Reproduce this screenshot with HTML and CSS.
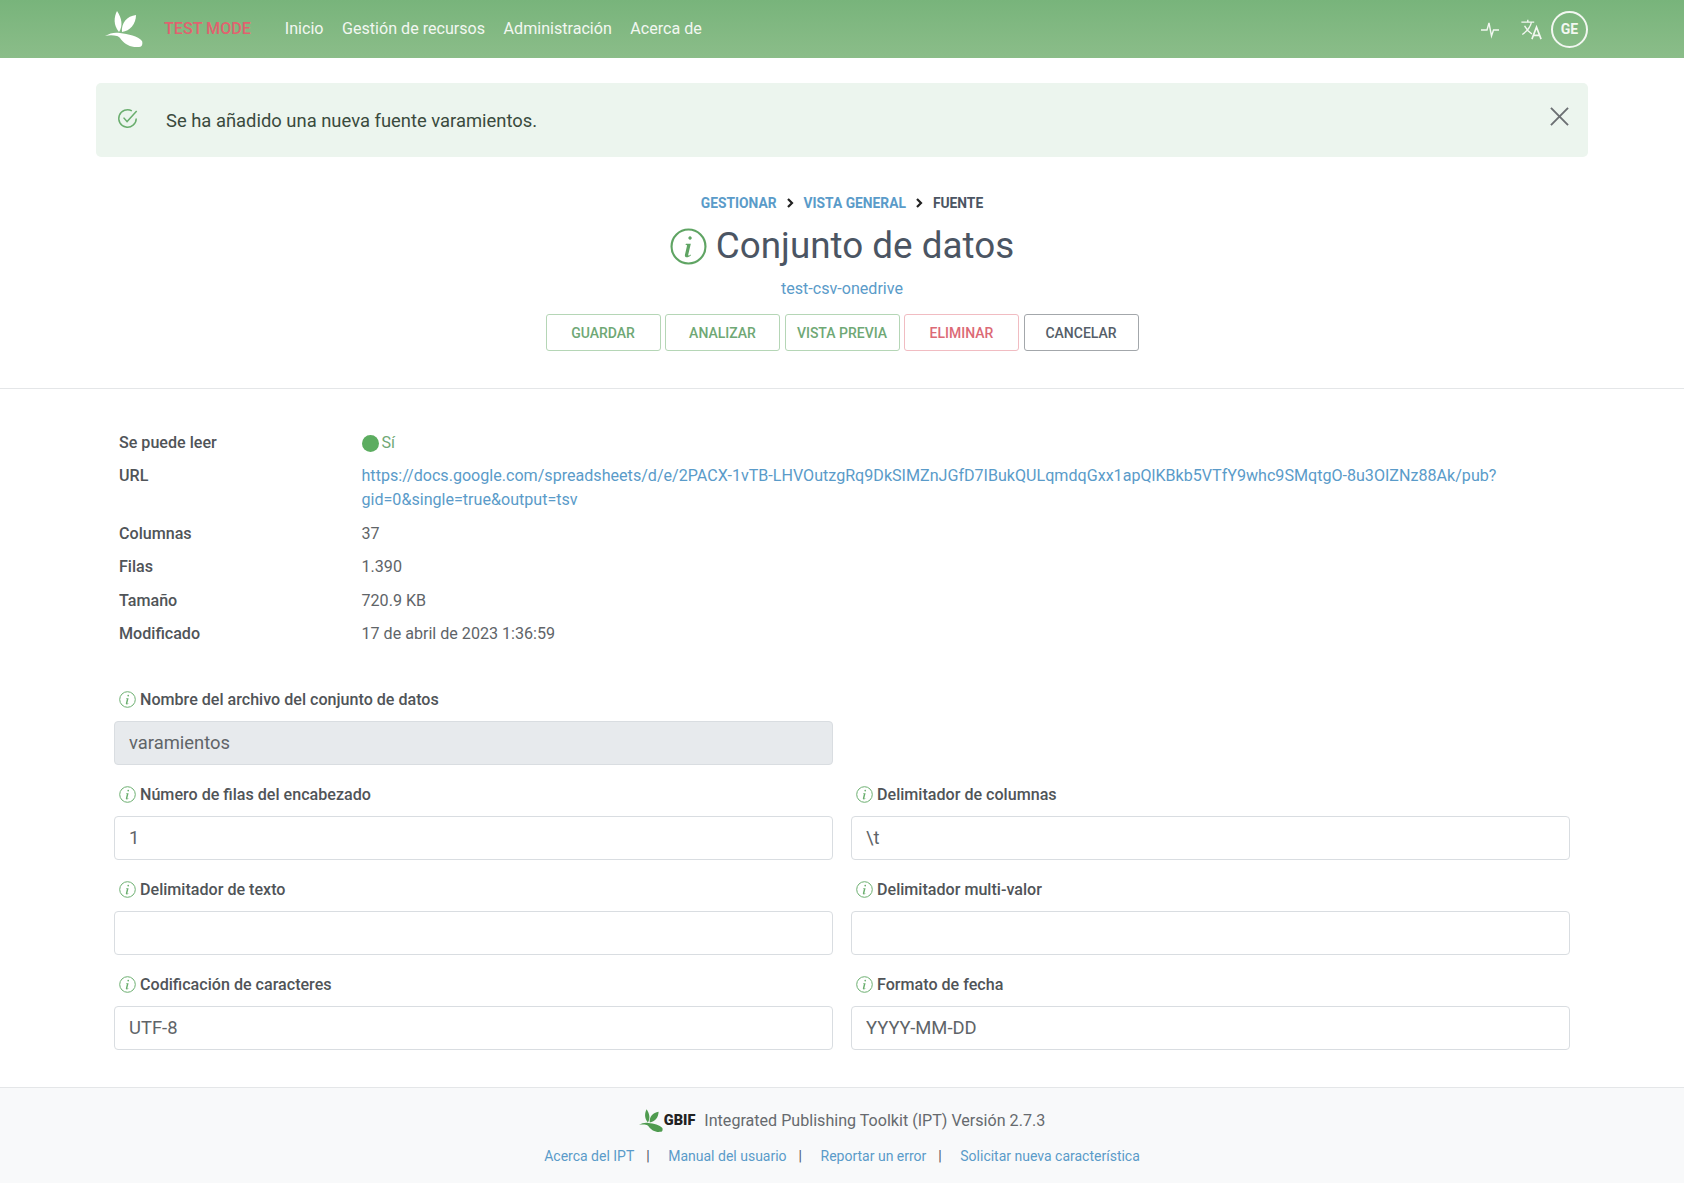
FILE: index.html
```html
<!DOCTYPE html>
<html lang="es">
<head>
    <meta charset="UTF-8">
    <title>IPT - Fuente</title>
    <link rel="stylesheet" href="styles.css">
</head>
<body>
    <svg class="sprites" width="0" height="0">
        <symbol id="info" viewBox="0 0 24 24">
            <circle cx="12" cy="12" r="11" fill="none" stroke="currentColor" stroke-width="1.4"/>
            <path d="M13 5.4a1.1 1.1 0 1 0 .01 0zM10.4 10.2h3.1l-1.7 7.2c-.1.5.3.6.7.4l1-.6.1.5c-1 .9-1.9 1.3-2.7 1.3-1 0-1.4-.6-1.2-1.6l1.3-5.8c.1-.5-.2-.7-1-.8z" fill="currentColor"/>
        </symbol>
        <symbol id="leaf" viewBox="0 0 38 36">
            <path d="M12 0c-3 6-4 14 2 21 4-6 3-14-2-21z"/>
            <path d="M31 4c-9 1-15 8-14 17 8-1 14-8 14-17z"/>
            <path d="M0 25c5-3 10-4 15-3 8 1 18 3 22 8 1 3 0 6-3 6-8 1-15-3-19-9-1-1-2-2-3-2-4-1-8-1-12 0z"/>
        </symbol>
    </svg>

    <nav class="navbar">
        <div class="navbar-inner">
            <a class="brand"><svg class="brand-logo"><use href="#leaf"/></svg></a>
            <span class="test-mode">TEST MODE</span>
            <ul class="nav-links">
                <li><a>Inicio</a></li>
                <li><a>Gestión de recursos</a></li>
                <li><a>Administración</a></li>
                <li><a>Acerca de</a></li>
            </ul>
            <div class="nav-right">
                <svg class="nav-icon" viewBox="0 0 20 20" fill="none" stroke="currentColor" stroke-width="1.4">
                    <path d="M1 11h6l2-7 2.500 13 2-6h5.500"/>
                </svg>
                <svg class="nav-icon nav-translate" viewBox="0 0 24 24" fill="none" stroke="currentColor" stroke-width="1.500">
                    <path d="M1.500 4.500h14M8.500 2v2.500"/>
                    <path d="M12.500 4.500c-1 5-5 10-10 13.500M5 8.500c2 4 5 7 8 9"/>
                    <path d="M13 23l5-13 5 13M14.800 19h6.400" stroke-width="1.800"/>
                </svg>
                <span class="avatar">GE</span>
            </div>
        </div>
    </nav>

    <div class="alert">
        <svg class="alert-icon" viewBox="0 0 24 24" fill="none" stroke="currentColor" stroke-width="1.700">
            <path d="M22 12a10 10 0 1 1-5-8.700"/>
            <path d="M7.500 11l4 4.500L22.500 3.500"/>
        </svg>
        <span class="alert-text">Se ha añadido una nueva fuente varamientos.</span>
        <svg class="alert-close" viewBox="0 0 20 20" fill="none" stroke="currentColor" stroke-width="2">
            <path d="M1 1l18 18M19 1L1 19"/>
        </svg>
    </div>

    <header class="page-head">
        <ol class="breadcrumb">
            <li><a>Gestionar</a></li>
            <li class="sep"><svg width="7" height="10" viewBox="0 0 7 10" fill="none" stroke="currentColor" stroke-width="2.200"><path d="M1 1l4 4-4 4"/></svg></li>
            <li><a>Vista general</a></li>
            <li class="sep"><svg width="7" height="10" viewBox="0 0 7 10" fill="none" stroke="currentColor" stroke-width="2.200"><path d="M1 1l4 4-4 4"/></svg></li>
            <li class="current">Fuente</li>
        </ol>
        <h1 class="title"><svg class="title-icon"><use href="#info"/></svg>Conjunto de datos</h1>
        <a class="subtitle">test-csv-onedrive</a>
        <div class="actions">
            <button class="btn btn-green">Guardar</button>
            <button class="btn btn-green">Analizar</button>
            <button class="btn btn-green">Vista previa</button>
            <button class="btn btn-red">Eliminar</button>
            <button class="btn btn-dark">Cancelar</button>
        </div>
    </header>

    <main class="content">
        <dl class="details">
            <dt>Se puede leer</dt>
            <dd class="readable"><span class="dot"></span>Sí</dd>
            <dt>URL</dt>
            <dd><a>https://docs.google.com/spreadsheets/d/e/2PACX-1vTB-LHVOutzgRq9DkSIMZnJGfD7IBukQULqmdqGxx1apQlKBkb5VTfY9whc9SMqtgO-8u3OIZNz88Ak/pub?gid=0&amp;single=true&amp;output=tsv</a></dd>
            <dt>Columnas</dt>
            <dd>37</dd>
            <dt>Filas</dt>
            <dd>1.390</dd>
            <dt>Tamaño</dt>
            <dd>720.9 KB</dd>
            <dt>Modificado</dt>
            <dd>17 de abril de 2023 1:36:59</dd>
        </dl>

        <form class="form-grid">
            <div class="field">
                <label><svg class="label-icon"><use href="#info"/></svg>Nombre del archivo del conjunto de datos</label>
                <input class="input" type="text" value="varamientos" disabled>
            </div>
            <div class="field"></div>
            <div class="field">
                <label><svg class="label-icon"><use href="#info"/></svg>Número de filas del encabezado</label>
                <input class="input" type="text" value="1">
            </div>
            <div class="field">
                <label><svg class="label-icon"><use href="#info"/></svg>Delimitador de columnas</label>
                <input class="input" type="text" value="\t">
            </div>
            <div class="field">
                <label><svg class="label-icon"><use href="#info"/></svg>Delimitador de texto</label>
                <input class="input" type="text" value="">
            </div>
            <div class="field">
                <label><svg class="label-icon"><use href="#info"/></svg>Delimitador multi-valor</label>
                <input class="input" type="text" value="">
            </div>
            <div class="field">
                <label><svg class="label-icon"><use href="#info"/></svg>Codificación de caracteres</label>
                <input class="input" type="text" value="UTF-8">
            </div>
            <div class="field">
                <label><svg class="label-icon"><use href="#info"/></svg>Formato de fecha</label>
                <input class="input" type="text" value="YYYY-MM-DD">
            </div>
        </form>
    </main>

    <footer class="footer">
        <div class="footer-top">
            <svg class="footer-logo"><use href="#leaf"/></svg>
            <span class="gbif">GBIF</span>
            <span class="version">Integrated Publishing Toolkit (IPT) Versión 2.7.3</span>
        </div>
        <ul class="footer-links">
            <li><a>Acerca del IPT</a></li>
            <li><a>Manual del usuario</a></li>
            <li><a>Reportar un error</a></li>
            <li><a>Solicitar nueva característica</a></li>
        </ul>
    </footer>
</body>
</html>
```

FILE: styles.css
```css
* {
    box-sizing: border-box;
}

body {
    margin: 0;
    font-family: Roboto, "Liberation Sans", sans-serif;
    font-size: 16.100px;
    line-height: 24px;
    color: #4b5563;
    background-color: #fff;
}

a {
    color: #5a9bc9;
    text-decoration: none;
}

ul, ol {
    list-style: none;
    margin: 0;
    padding: 0;
}

.sprites {
    position: absolute;
}

.navbar {
    height: 58px;
    background: linear-gradient(#78b47b, #8bbd89);
}

.navbar-inner {
    display: flex;
    align-items: center;
    height: 58px;
    margin: 0 96px;
    padding-left: 9px;
}

.brand {
    display: flex;
}

.brand-logo {
    width: 38px;
    height: 36px;
    fill: #fff;
}

.test-mode {
    margin-left: 21px;
    font-weight: 500;
    color: #e0636f;
}

.nav-links {
    display: flex;
    gap: 18.500px;
    margin-left: 34px;
}

.nav-links a {
    color: #f2f7f1;
}

.nav-right {
    display: flex;
    align-items: center;
    margin-left: auto;
    color: #f2f7f1;
}

.nav-icon {
    width: 20px;
    height: 20px;
}

.nav-translate {
    width: 22px;
    height: 22px;
    margin-left: 20px;
}

.avatar {
    display: flex;
    align-items: center;
    justify-content: center;
    width: 37px;
    height: 37px;
    margin-left: 9px;
    border: 2px solid #f2f7f1;
    border-radius: 50%;
    font-size: 14px;
    font-weight: 700;
}

.alert {
    display: flex;
    align-items: center;
    height: 74px;
    margin: 25px 96px 0;
    padding: 0 19px 0 21px;
    background-color: #ecf5ee;
    border-radius: 5px;
    color: #3a4a3d;
}

.alert-icon {
    width: 21px;
    height: 21px;
    margin-top: -4px;
    color: #6aae6e;
}

.alert-text {
    margin: 2px 0 0 28px;
    font-size: 18.400px;
}

.alert-close {
    width: 19px;
    height: 19px;
    margin-left: auto;
    margin-top: -7px;
    color: #6b6f72;
}

.page-head {
    display: flex;
    flex-direction: column;
    align-items: center;
    height: 232px;
    padding-top: 34px;
    border-bottom: 1px solid #e4e6e8;
}

.breadcrumb {
    display: flex;
    align-items: center;
    gap: 10px;
    font-size: 13.800px;
    line-height: 24px;
    font-weight: 700;
    text-transform: uppercase;
}

.breadcrumb .sep {
    display: flex;
    color: #222;
}

.title {
    display: flex;
    align-items: center;
    margin: 0;
    height: 52px;
    margin-top: 5px;
    font-size: 36.800px;
    font-weight: 400;
    color: #4b5563;
}

.title-icon {
    width: 37px;
    height: 37px;
    margin-right: 9px;
    color: #5fa463;
}

.subtitle {
    margin-top: 5px;
}

.actions {
    display: flex;
    gap: 4.500px;
    margin-top: 13px;
}

.btn {
    width: 115px;
    height: 37px;
    padding: 0;
    background-color: #fff;
    border: 1px solid;
    border-radius: 3px;
    font-family: inherit;
    font-size: 14px;
    font-weight: 500;
    text-transform: uppercase;
}

.btn-green {
    color: #6fa875;
    border-color: #b5d6b6;
}

.btn-red {
    color: #dc6a76;
    border-color: #f1bcc2;
}

.btn-dark {
    color: #555e69;
    border-color: #a3a7ab;
}

.content {
    padding: 0 96px;
}

.details {
    display: grid;
    grid-template-columns: 242.500px 1fr;
    row-gap: 9.400px;
    margin: 42px 0 0;
    padding: 0 23px;
    color: #606468;
}

.details dt {
    font-weight: 500;
    color: #505458;
}

.details dd {
    margin: 0;
    overflow-wrap: anywhere;
}

.readable {
    display: flex;
    align-items: center;
    color: #6fa875;
}

.details .readable {
    color: #6fa875;
}

.dot {
    width: 17px;
    height: 17px;
    margin-right: 3px;
    background-color: #5cad60;
    border-radius: 50%;
}

.form-grid {
    display: grid;
    grid-template-columns: 1fr 1fr;
    column-gap: 18px;
    row-gap: 11px;
    margin-top: 42px;
    padding: 0 18px;
}

.field {
    min-height: 84px;
}

.field label {
    display: flex;
    align-items: center;
    height: 24px;
    padding-left: 5px;
    font-weight: 500;
    color: #505458;
    margin-bottom: 9px;
}

.label-icon {
    width: 17px;
    height: 17px;
    margin-right: 4px;
    color: #6aae6e;
}

.input {
    display: block;
    width: 100%;
    height: 44px;
    padding: 0 14px;
    border: 1px solid #d9dde1;
    border-radius: 4px;
    font-family: inherit;
    font-size: 18.400px;
    color: #606468;
    background-color: #fff;
}

.input:disabled {
    background-color: #e7eaed;
    opacity: 1;
}

.footer {
    margin-top: 30px;
    height: 96px;
    padding-top: 21px;
    background-color: #f8f9fa;
    border-top: 1px solid #e4e6e8;
    color: #666a6e;
}

.footer-top {
    display: flex;
    align-items: center;
    justify-content: center;
    height: 24px;
}

.footer-logo {
    width: 24px;
    height: 23px;
    fill: #4f9b4f;
}

.gbif {
    margin-left: 1px;
    font-size: 14.500px;
    font-weight: 900;
    color: #222;
}

.version {
    margin-left: 9px;
}

.footer-links {
    display: flex;
    justify-content: center;
    margin-top: 11px;
    font-size: 14px;
}

.footer-links li + li {
    margin-left: 18.500px;
}

.footer-links li:not(:last-child)::after {
    content: "|";
    margin-left: 12px;
    color: #4b5563;
}
```
